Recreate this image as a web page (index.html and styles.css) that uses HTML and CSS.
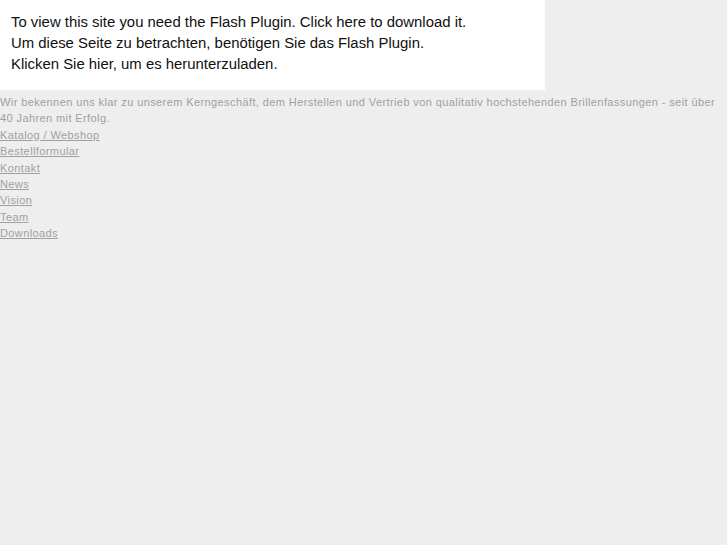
FILE: index.html
```html
<!DOCTYPE html>
<html lang="de">
<head>
  <meta charset="UTF-8" />
  <title>Brillenfassungen</title>
  <link rel="stylesheet" href="styles.css">
</head>
<body>
  <!-- Flash fallback -->
  <div class="flash">
    <a href="#">To view this site you need the Flash Plugin. Click here to download it.<br>
    Um diese Seite zu betrachten, benötigen Sie das Flash Plugin.<br>
    Klicken Sie hier, um es herunterzuladen.</a>
  </div>

  <div class="content">
    <p>Wir bekennen uns klar zu unserem Kerngeschäft, dem Herstellen und Vertrieb von qualitativ hochstehenden Brillenfassungen - seit über 40 Jahren mit Erfolg.</p>
    <a href="#">Katalog / Webshop</a><br>
    <a href="#">Bestellformular</a><br>
    <a href="#">Kontakt</a><br>
    <a href="#">News</a><br>
    <a href="#">Vision</a><br>
    <a href="#">Team</a><br>
    <a href="#">Downloads</a>
  </div>
</body>
</html>
```
FILE: styles.css
```css
body {
  margin: 0;
  background-color: #eeeeee;
  font-family: "Liberation Sans", Arial, sans-serif;
}
.flash {
  width: 534px;
  height: 78px;
  padding: 12px 0 0 11px;
  background: #fff;
}
.flash a {
  color: #111;
  text-decoration: none;
  font-size: 14.9px;
  line-height: 21px;
}
.content {
  font-size: 11px;
  line-height: 16.4px;
  letter-spacing: 0.4px;
  color: #a0a0a0;
  padding-top: 4px;
}
.content p {
  margin: 0;
}
.content a {
  color: #a0a0a0;
}
```
